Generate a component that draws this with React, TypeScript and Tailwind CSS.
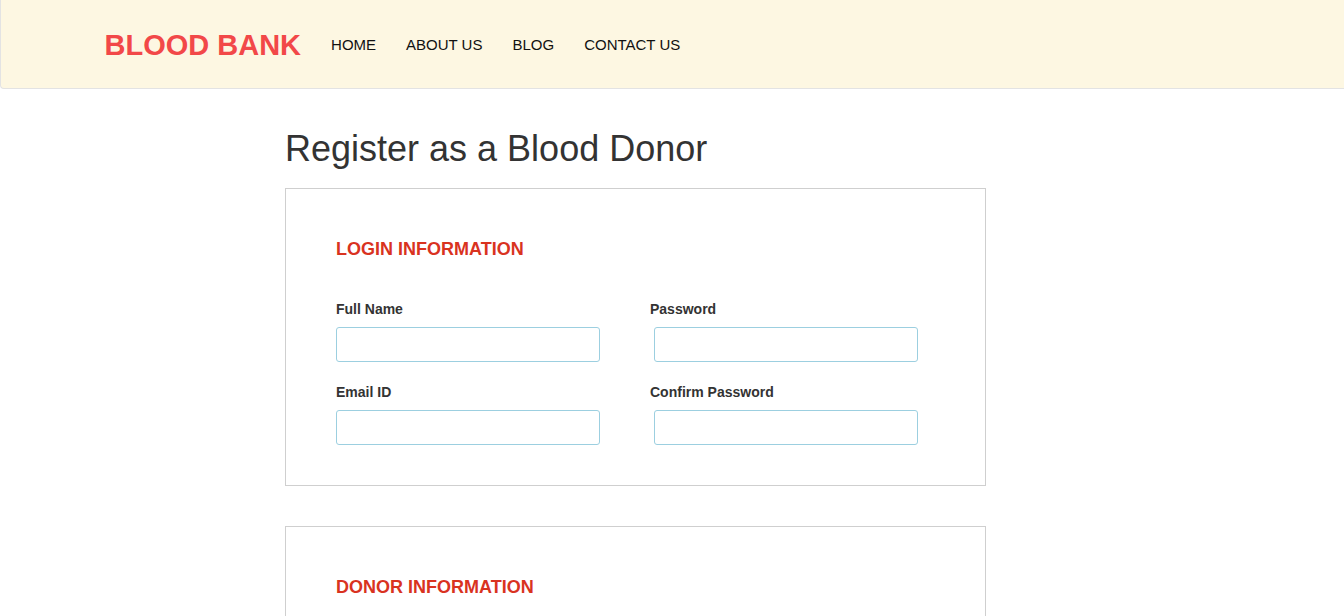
import React from "react";

const navLinks = ["HOME", "ABOUT US", "BLOG", "CONTACT US"];

const Field = ({ label, shift }: { label: string; shift?: boolean }) => (
  <div className="flex flex-col">
    <label className="text-[14px] leading-[20px] font-bold text-[#333]">{label}</label>
    <input
      type={label.includes("Password") ? "password" : "text"}
      className={`mt-[8px] h-[35px] w-[264px] rounded-[3px] border border-[#9ccfe0] bg-white px-2 outline-none ${
        shift ? "ml-[4px]" : ""
      }`}
    />
  </div>
);

const Section = ({ title, children }: { title: string; children?: React.ReactNode }) => (
  <div className="border border-[#cfcfcf] px-[50px] pt-[50px] pb-[40px]">
    <h3 className="text-[18px] leading-[20px] font-bold text-[#d9331f]">{title}</h3>
    {children}
  </div>
);

export default function App() {
  return (
    <div className="min-h-screen bg-white font-['Liberation_Sans',Arial,sans-serif]">
      <nav className="h-[89px] border-l border-b border-[#e3e3e3] rounded-bl-[4px] bg-[#fdf7e2]">
        <div className="mx-auto flex h-full w-[1170px] items-center px-[17px] pt-[2px]">
          <a className="text-[29px] font-bold leading-none text-[#f24848]">BLOOD BANK</a>
          <ul className="ml-[30px] flex gap-[30px]">
            {navLinks.map((l) => (
              <li key={l} className="text-[15px] text-[#111]">
                {l}
              </li>
            ))}
          </ul>
        </div>
      </nav>

      <main className="mx-auto w-[1170px]">
        <div className="ml-[198px] w-[701px]">
          <h1 className="mt-[40px] text-[36px] leading-[40px] text-[#333]">Register as a Blood Donor</h1>

          <div className="mt-[19px]">
            <Section title="LOGIN INFORMATION">
              <div className="mt-[40px] grid grid-cols-[314px_1fr] gap-y-[20px]">
                <Field label="Full Name" />
                <Field label="Password" shift />
                <Field label="Email ID" />
                <Field label="Confirm Password" shift />
              </div>
            </Section>
          </div>

          <div className="mt-[40px]">
            <Section title="DONOR INFORMATION">
              <div className="h-[120px]" />
            </Section>
          </div>
        </div>
      </main>
    </div>
  );
}
